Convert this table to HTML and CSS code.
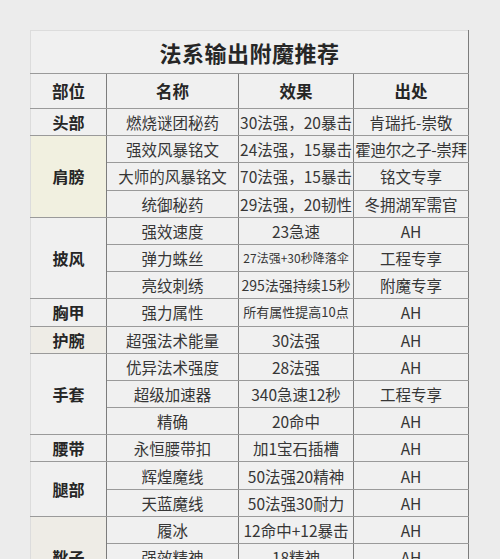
FILE: index.html
```html
<!DOCTYPE html>
<html lang="zh-CN">
<head>
<meta charset="utf-8">
<link rel="stylesheet" href="styles.css">
</head>
<body>
<div class="wrap">
<table class="tbl">
  <colgroup>
    <col class="c1"><col class="c2"><col class="c3"><col class="c4">
  </colgroup>
  <tr class="title-row"><td colspan="4" class="title">法系输出附魔推荐</td></tr>
  <tr class="head-row"><th>部位</th><th>名称</th><th>效果</th><th>出处</th></tr>
  <tr><td class="part">头部</td><td>燃烧谜团秘药</td><td>30法强，20暴击</td><td>肯瑞托-崇敬</td></tr>
  <tr><td class="part cream" rowspan="3">肩膀</td><td>强效风暴铭文</td><td>24法强，15暴击</td><td class="tight">霍迪尔之子-崇拜</td></tr>
  <tr><td>大师的风暴铭文</td><td>70法强，15暴击</td><td>铭文专享</td></tr>
  <tr><td>统御秘药</td><td>29法强，20韧性</td><td>冬拥湖军需官</td></tr>
  <tr><td class="part" rowspan="3">披风</td><td>强效速度</td><td>23急速</td><td>AH</td></tr>
  <tr><td>弹力蛛丝</td><td class="xs">27法强+30秒降落伞</td><td>工程专享</td></tr>
  <tr><td>亮纹刺绣</td><td class="sm">295法强持续15秒</td><td>附魔专享</td></tr>
  <tr><td class="part">胸甲</td><td>强力属性</td><td class="s13">所有属性提高10点</td><td>AH</td></tr>
  <tr><td class="part beige">护腕</td><td>超强法术能量</td><td>30法强</td><td>AH</td></tr>
  <tr><td class="part" rowspan="3">手套</td><td>优异法术强度</td><td>28法强</td><td>AH</td></tr>
  <tr><td>超级加速器</td><td>340急速12秒</td><td>工程专享</td></tr>
  <tr><td>精确</td><td>20命中</td><td>AH</td></tr>
  <tr><td class="part">腰带</td><td>永恒腰带扣</td><td>加1宝石插槽</td><td>AH</td></tr>
  <tr><td class="part" rowspan="2">腿部</td><td>辉煌魔线</td><td>50法强20精神</td><td>AH</td></tr>
  <tr><td>天蓝魔线</td><td>50法强30耐力</td><td>AH</td></tr>
  <tr><td class="part beige" rowspan="3">靴子</td><td>履冰</td><td>12命中+12暴击</td><td>AH</td></tr>
  <tr><td>强效精神</td><td>18精神</td><td>AH</td></tr>
  <tr><td>猫之迅捷</td><td>6敏捷+移速</td><td>AH</td></tr>
</table>
</div>
</body>
</html>
```

FILE: styles.css
```css
html, body {
  margin: 0;
  padding: 0;
  background: #ececec;
}
.wrap {
  padding: 30px 0 0 30px;
}
.tbl {
  border-collapse: collapse;
  table-layout: fixed;
  width: 438px;
  font-family: "Noto Sans CJK SC", "Noto Sans", sans-serif;
  color: #363636;
  background: #f0f0f0;
}
.c1 { width: 76px; }
.c2 { width: 132px; }
.c3 { width: 115px; }
.c4 { width: 115px; }
.tbl td, .tbl th {
  border-top: 1px solid #9a9a9a;
  border-bottom: 1px solid #9a9a9a;
  border-left: 1px solid #7c7c7c;
  border-right: 1px solid #7c7c7c;
  text-align: center;
  padding: 0;
  height: 26.2px;
  font-size: 15.5px;
  line-height: 20px;
  white-space: nowrap;
  overflow: hidden;
}
.tbl tr > :first-child {
  border-left: 1px solid #dcdcdc;
}
.tbl .title {
  height: 42px;
  font-size: 22px;
  font-weight: bold;
  color: #262626;
  border-top: 1px solid #dcdcdc;
  letter-spacing: 0.5px;
}
.tbl th {
  height: 34px;
  font-size: 16.5px;
  font-weight: bold;
  color: #262626;
}
.tbl .part {
  font-size: 16px;
  font-weight: bold;
  color: #262626;
}
.tbl .cream {
  background: #f1f0e0;
}
.tbl .beige {
  background: #eeece6;
}
.tbl .tight {
  letter-spacing: -0.3px;
}
.tbl .xs {
  font-size: 12px;
}
.tbl .sm {
  font-size: 14px;
}
.tbl .s13 {
  font-size: 13px;
}
```
